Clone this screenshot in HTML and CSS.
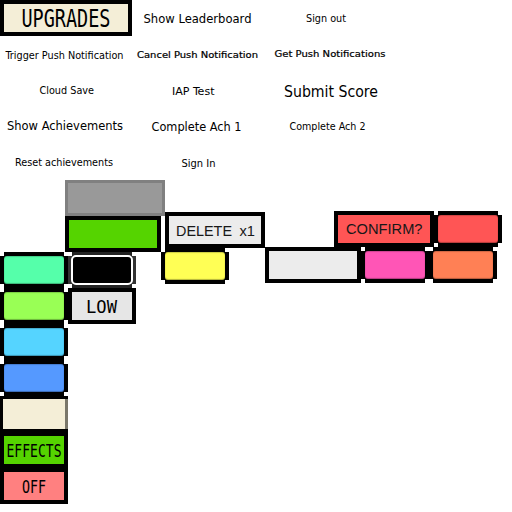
FILE: index.html
```
<!DOCTYPE html>
<html lang="en">
<head>
<meta charset="utf-8">
<title>Button sheet</title>
<link rel="stylesheet" href="styles.css">
</head>
<body>
<section class="labels">
  <div class="box upgrades"><svg class="fit"><text class="lcd lcd-lg" x="17.5" y="23" textLength="89" lengthAdjust="spacingAndGlyphs">UPGRADES</text></svg></div>
  <svg class="label"><text class="md" x="11.5" y="23" textLength="108" lengthAdjust="spacingAndGlyphs">Show Leaderboard</text></svg>
  <svg class="label"><text x="42" y="22" textLength="40" lengthAdjust="spacingAndGlyphs">Sign out</text></svg>

  <svg class="label"><text x="5.5" y="23" textLength="118" lengthAdjust="spacingAndGlyphs">Trigger Push Notification</text></svg>
  <svg class="label"><text class="sm" x="5" y="22" textLength="121" lengthAdjust="spacingAndGlyphs">Cancel Push Notification</text></svg>
  <svg class="label"><text class="sm" x="10.5" y="21" textLength="111" lengthAdjust="spacingAndGlyphs">Get Push Notifications</text></svg>

  <svg class="label"><text x="39.5" y="22" textLength="54.5" lengthAdjust="spacingAndGlyphs">Cloud Save</text></svg>
  <svg class="label"><text x="40" y="23" textLength="42.5" lengthAdjust="spacingAndGlyphs">IAP Test</text></svg>
  <svg class="label"><text class="lg" x="20" y="25" textLength="94" lengthAdjust="spacingAndGlyphs">Submit Score</text></svg>

  <svg class="label"><text class="md" x="7" y="22" textLength="116" lengthAdjust="spacingAndGlyphs">Show Achievements</text></svg>
  <svg class="label"><text class="md" x="19.5" y="23" textLength="90" lengthAdjust="spacingAndGlyphs">Complete Ach 1</text></svg>
  <svg class="label"><text x="25.5" y="22" textLength="76" lengthAdjust="spacingAndGlyphs">Complete Ach 2</text></svg>

  <svg class="label"><text x="15" y="22" textLength="98" lengthAdjust="spacingAndGlyphs">Reset achievements</text></svg>
  <svg class="label"><text x="49.5" y="23" textLength="34" lengthAdjust="spacingAndGlyphs">Sign In</text></svg>
</section>

<section class="buttons">
  <div class="stack first">
    <div class="key"><span class="face teal"></span></div>
    <div class="key"><span class="face lime"></span></div>
    <div class="key"><span class="face sky"></span></div>
    <div class="key"><span class="face blue"></span></div>
    <div class="box small cream"></div>
    <div class="box small green"><svg class="fit"><text class="lcd" x="2.5" y="21" textLength="55" lengthAdjust="spacingAndGlyphs">EFFECTS</text></svg></div>
    <div class="box small salmon"><svg class="fit"><text class="lcd" x="18" y="20.5" textLength="24" lengthAdjust="spacingAndGlyphs">OFF</text></svg></div>
  </div>
  <div class="stack second">
    <div class="box wide disabled"></div>
    <div class="box medium green"></div>
    <div class="key dark"><span class="face black"></span></div>
    <div class="box small low"><svg class="fit"><text class="lcd" x="14" y="20.5" textLength="31" lengthAdjust="spacingAndGlyphs">LOW</text></svg></div>
  </div>
  <div class="stack third">
    <div class="box wide delete"><svg class="fit"><text class="sans" x="7" y="19.5" textLength="56" lengthAdjust="spacingAndGlyphs">DELETE</text><text class="sans" x="70.5" y="19.5" textLength="15.5" lengthAdjust="spacingAndGlyphs">x1</text></svg></div>
    <div class="key"><span class="face yellow"></span></div>
  </div>
  <div class="stack fourth">
    <div class="row confirm-row">
      <div class="box wide red"><svg class="fit"><text class="sans" x="8" y="19.3" textLength="76.5" lengthAdjust="spacingAndGlyphs">CONFIRM?</text></svg></div>
      <div class="key"><span class="face red"></span></div>
    </div>
    <div class="row">
      <div class="box medium silver"></div>
      <div class="key"><span class="face pink"></span></div>
      <div class="key"><span class="face orange"></span></div>
    </div>
  </div>
</section>
</body>
</html>
```
FILE: styles.css
```
* { box-sizing: border-box; }
html, body { margin: 0; background: #fff; }
body { width: 512px; height: 512px; overflow: hidden; }
svg { display: block; overflow: visible; }

.labels { display: grid; grid-template-columns: repeat(3, 132px); grid-auto-rows: 36px; }
.label { width: 132px; height: 36px; }
text { font-family: "DejaVu Sans Condensed", "DejaVu Sans", sans-serif; font-size: 11.3px; fill: #000; }
.sm { font-size: 9.4px; stroke: #000; stroke-width: 0.2px; }
.md { font-size: 12.6px; }
.lg { font-size: 16px; }
.lcd { font-family: "DejaVu Sans Mono", monospace; font-size: 17.5px; }
.lcd-lg { font-size: 24.3px; }
.sans { font-family: "Liberation Sans", Arial, sans-serif; font-size: 14.5px; fill: #181818; }

.buttons { display: flex; align-items: flex-start; }
.stack { display: flex; flex-direction: column; flex: none; }
.row { display: flex; }
.first { width: 65px; margin-top: 72px; }
.second { width: 96px; }
.second .key, .second .small { margin-left: 3px; }
.third { width: 104px; margin-top: 32px; }
.fourth { margin-top: 31px; }
.confirm-row { margin-left: 69px; }

.box { flex: none; height: 36px; border: 4px solid #000; }
.fit { width: 100%; height: 100%; }
.upgrades { width: 132px; background: #f4eed7; }
.small { width: 68px; }
.medium { width: 96px; }
.wide { width: 100px; }
.delete { margin-left: 4px; background: #ececec; }
.disabled { border: 3px solid #808080; background: #999; }
.cream {
  border-width: 3px 0 3px 3px;
  background: linear-gradient(to right, #f4eed7 62px, #7a776b 62px);
}
.low { background: #e6e6e6; }
.silver { background: #ececec; }
.green { background: #55d400; }
.salmon { background: #ff8080; }

.key {
  flex: none;
  width: 68px;
  height: 36px;
  padding: 4px;
  background:
    linear-gradient(#000, #000) center / 60px 36px no-repeat,
    linear-gradient(#000, #000) center / 68px 28px no-repeat;
}
.face { display: block; height: 28px; border-radius: 3px; box-shadow: inset 0 -1px 1px rgba(0, 0, 0, 0.3), inset 0 1px 1px rgba(0, 0, 0, 0.2); }
.dark {
  padding: 3px;
  background:
    linear-gradient(#222, #222) center / 60px 36px no-repeat,
    linear-gradient(#333, #333) center / 68px 28px no-repeat;
}
.black { height: 30px; border: 2px solid #fff; border-radius: 5px; background: #000; box-shadow: none; }
.teal { background: #55ffaa; }
.lime { background: #99ff55; }
.sky { background: #55d4ff; }
.blue { background: #5599ff; }
.yellow { background: #ffff55; }
.red { background: #ff5555; }
.pink { background: #ff55b6; }
.orange { background: #ff8055; }
```
